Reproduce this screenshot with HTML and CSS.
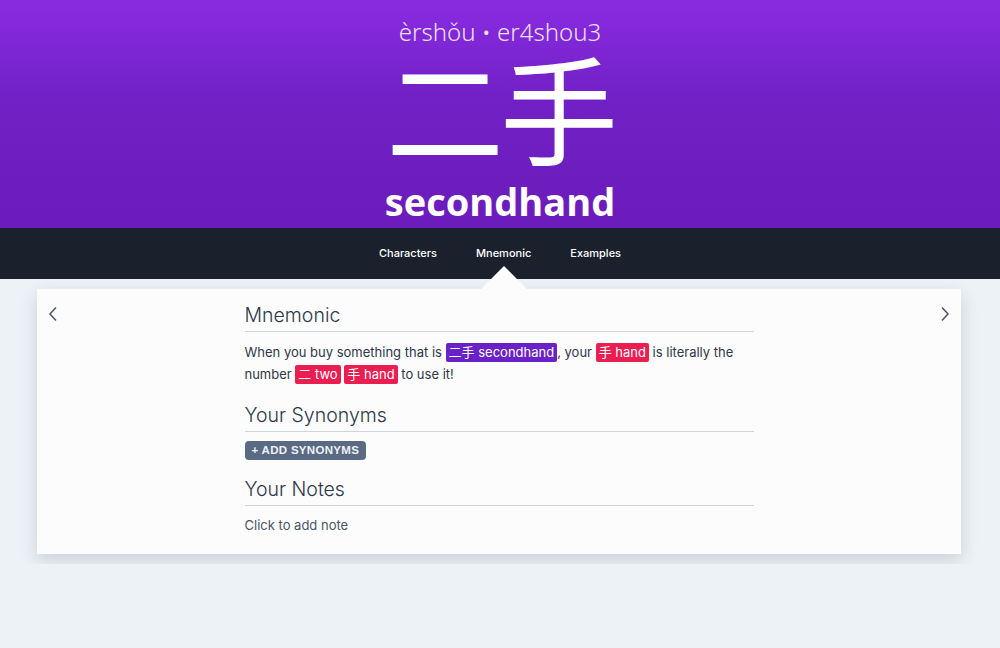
FILE: index.html
```html
<!DOCTYPE html>
<html lang="en">
<head>
  <meta charset="UTF-8">
  <meta name="viewport" content="width=device-width, initial-scale=1.0">
  <link rel="stylesheet" href="styles.css">
  <title>二手 secondhand</title>
</head>
<body>

<header class="hero">
  <div class="pinyin">èrshǒu • er4shou3</div>
  <div class="hanzi">二手</div>
  <h1 class="meaning">secondhand</h1>
</header>

<nav class="tabs">
  <a class="tab">Characters</a>
  <a class="tab active">Mnemonic</a>
  <a class="tab">Examples</a>
</nav>

<main class="page">
  <div class="card">
    <button class="arrow arrow-left" aria-label="Previous">
      <svg width="10" height="16" viewBox="0 0 10 16"><path d="M8 1.5 L2 8 L8 14.5" fill="none" stroke="#4a5568" stroke-width="1.5"/></svg>
    </button>

    <div class="content">
      <h2 class="section-title">Mnemonic</h2>
      <p class="text">
        When you buy something that is <span class="tag tag-word">二手 secondhand</span>, your <span class="tag tag-char">手 hand</span> is literally the
        number <span class="tag tag-char">二 two</span> <span class="tag tag-char">手 hand</span> to use it!
      </p>

      <h2 class="section-title">Your Synonyms</h2>
      <button class="add-btn">+ Add synonyms</button>

      <h2 class="section-title">Your Notes</h2>
      <p class="note">Click to add note</p>
    </div>

    <button class="arrow arrow-right" aria-label="Next">
      <svg width="10" height="16" viewBox="0 0 10 16"><path d="M2 1.5 L8 8 L2 14.5" fill="none" stroke="#4a5568" stroke-width="1.5"/></svg>
    </button>
  </div>
</main>

</body>
</html>
```

FILE: styles.css
```css
body {
  margin: 0;
  background: #edf2f7;
  font-family: Inter, "Noto Sans", "Noto Sans CJK SC", sans-serif;
  color: #2d3748;
}

.hero {
  height: 228px;
  background: linear-gradient(180deg, #8a2be2 0%, #7020c4 45%, #6c1cbc 100%);
  color: #fff;
  text-align: center;
  overflow: hidden;
}

.pinyin {
  padding-top: 16px;
  font-family: "Noto Sans", sans-serif;
  font-size: 24px;
  font-weight: 300;
  line-height: 32px;
  color: #ece0fb;
}

.hanzi {
  font-family: "Noto Sans CJK SC", sans-serif;
  font-size: 118px;
  line-height: 130px;
  margin-top: -7px;
  letter-spacing: -4px;
}

.meaning {
  margin: 6px 0 0;
  font-family: "Open Sans", sans-serif;
  font-size: 38px;
  font-weight: 700;
  line-height: 48px;
}

.tabs {
  height: 51px;
  background: #1a202c;
  display: flex;
  justify-content: center;
  align-items: center;
  gap: 39px;
  font-size: 11px;
  font-weight: 500;
}

.tab {
  color: #fff;
  position: relative;
  line-height: 51px;
}

.tab.active::after {
  content: "";
  position: absolute;
  left: 50%;
  top: 38px;
  margin-left: -23px;
  border: 23px solid transparent;
  border-top: 0;
  border-bottom: 23px solid #fcfcfc;
}

.page {
  padding: 10px 39px 10px 37px;
}

.card {
  background: #fcfcfc;
  box-shadow: 0 6px 16px rgba(45, 55, 72, 0.18);
  display: flex;
  justify-content: space-between;
  min-height: 265px;
}

.arrow {
  background: none;
  border: 0;
  padding: 17px 11px;
  align-self: flex-start;
  cursor: pointer;
}

.content {
  width: 509px;
  padding: 12px 0 18px;
}

.section-title {
  margin: 0 0 9px;
  font-size: 19.5px;
  font-weight: 300;
  line-height: 28px;
  color: #2d3748;
  border-bottom: 1px solid #cbd5e0;
  padding-bottom: 2px;
}

.text {
  margin: 0 0 16px;
  font-size: 13px;
  line-height: 22px;
}

.tag {
  display: inline-block;
  color: #fff;
  padding: 0 3px;
  line-height: 19px;
  border-radius: 2px;
  font-size: 13px;
}

.tag-word {
  background: #6b21c8;
}

.tag-char {
  background: #ea1e50;
}

.add-btn {
  display: block;
  margin: 3px 0 15px;
  background: #5a6a82;
  color: #edf2f7;
  border: 0;
  border-radius: 4px;
  padding: 3px 7px;
  font-family: "Liberation Sans", Arial, sans-serif;
  font-size: 11.5px;
  font-weight: 700;
  text-transform: uppercase;
  letter-spacing: 0.3px;
  line-height: 13px;
}

.note {
  margin: 11px 0 0;
  font-size: 13px;
  color: #4a5568;
}
```
